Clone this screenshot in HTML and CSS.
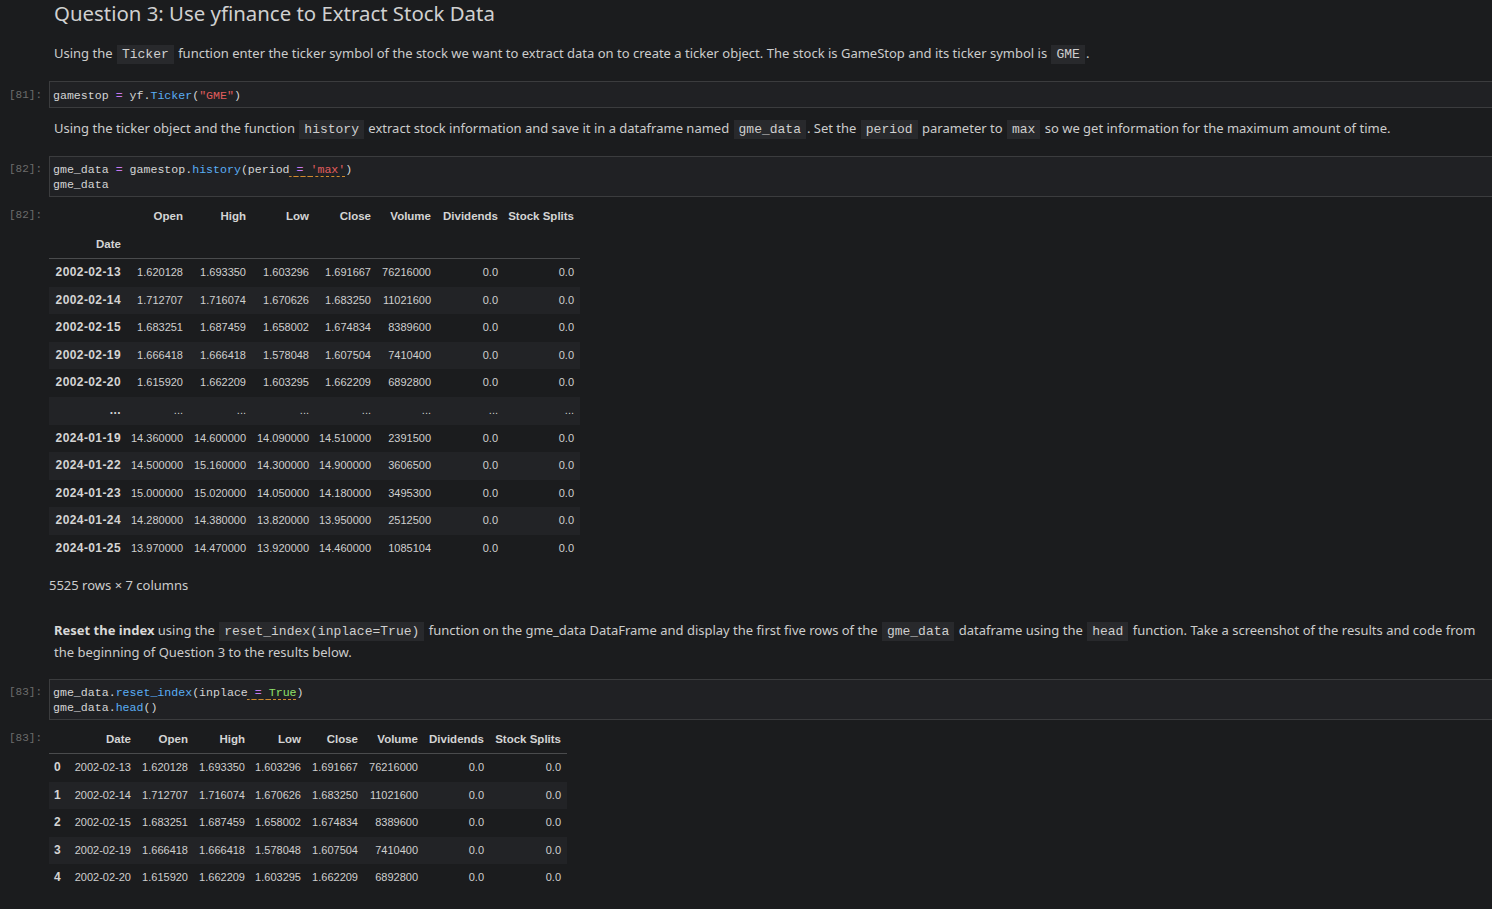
FILE: index.html
```html
<!DOCTYPE html>
<html lang="en">
<head>
<meta charset="utf-8">
<title>Question 3: Use yfinance to Extract Stock Data</title>
<link rel="stylesheet" href="styles.css">
</head>
<body>
<main class="notebook">

  <section class="cell md cell-title">
    <div class="prompt"></div>
    <div class="cell-body">
      <h2 class="title">Question 3: Use yfinance to Extract Stock Data</h2>
    </div>
  </section>

  <section class="cell md cell-p1">
    <div class="prompt"></div>
    <div class="cell-body">
      <p>Using the <code class="inline">Ticker</code> function enter the ticker symbol of the stock we want to extract data on to create a ticker object. The stock is GameStop and its ticker symbol is <code class="inline">GME</code>.</p>
    </div>
  </section>

  <section class="cell code cell-c81">
    <div class="prompt">[81]:</div>
    <div class="cell-body">
      <div class="input">gamestop <span class="op">=</span> yf.<span class="fn">Ticker</span>(<span class="str">"GME"</span>)</div>
    </div>
  </section>

  <section class="cell md cell-p2">
    <div class="prompt"></div>
    <div class="cell-body">
      <p>Using the ticker object and the function <code class="inline">history</code> extract stock information and save it in a dataframe named <code class="inline">gme_data</code>. Set the <code class="inline">period</code> parameter to <code class="inline">max</code> so we get information for the maximum amount of time.</p>
    </div>
  </section>

  <section class="cell code cell-c82">
    <div class="prompt">[82]:</div>
    <div class="cell-body">
      <div class="input">gme_data <span class="op">=</span> gamestop.<span class="fn">history</span>(period<span class="lint"> <span class="op">=</span> <span class="str">'max'</span></span>)
gme_data</div>
    </div>
  </section>

  <section class="cell output out-82">
    <div class="prompt">[82]:</div>
    <div class="cell-body">
      <table class="df df-hist">
        <colgroup><col><col><col><col><col><col><col><col></colgroup>
        <thead>
          <tr><th></th><th>Open</th><th>High</th><th>Low</th><th>Close</th><th>Volume</th><th>Dividends</th><th>Stock Splits</th></tr>
          <tr class="index-name"><th>Date</th><th></th><th></th><th></th><th></th><th></th><th></th><th></th></tr>
        </thead>
        <tbody>
          <tr><th>2002-02-13</th><td>1.620128</td><td>1.693350</td><td>1.603296</td><td>1.691667</td><td>76216000</td><td>0.0</td><td>0.0</td></tr>
          <tr><th>2002-02-14</th><td>1.712707</td><td>1.716074</td><td>1.670626</td><td>1.683250</td><td>11021600</td><td>0.0</td><td>0.0</td></tr>
          <tr><th>2002-02-15</th><td>1.683251</td><td>1.687459</td><td>1.658002</td><td>1.674834</td><td>8389600</td><td>0.0</td><td>0.0</td></tr>
          <tr><th>2002-02-19</th><td>1.666418</td><td>1.666418</td><td>1.578048</td><td>1.607504</td><td>7410400</td><td>0.0</td><td>0.0</td></tr>
          <tr><th>2002-02-20</th><td>1.615920</td><td>1.662209</td><td>1.603295</td><td>1.662209</td><td>6892800</td><td>0.0</td><td>0.0</td></tr>
          <tr><th>...</th><td>...</td><td>...</td><td>...</td><td>...</td><td>...</td><td>...</td><td>...</td></tr>
          <tr><th>2024-01-19</th><td>14.360000</td><td>14.600000</td><td>14.090000</td><td>14.510000</td><td>2391500</td><td>0.0</td><td>0.0</td></tr>
          <tr><th>2024-01-22</th><td>14.500000</td><td>15.160000</td><td>14.300000</td><td>14.900000</td><td>3606500</td><td>0.0</td><td>0.0</td></tr>
          <tr><th>2024-01-23</th><td>15.000000</td><td>15.020000</td><td>14.050000</td><td>14.180000</td><td>3495300</td><td>0.0</td><td>0.0</td></tr>
          <tr><th>2024-01-24</th><td>14.280000</td><td>14.380000</td><td>13.820000</td><td>13.950000</td><td>2512500</td><td>0.0</td><td>0.0</td></tr>
          <tr><th>2024-01-25</th><td>13.970000</td><td>14.470000</td><td>13.920000</td><td>14.460000</td><td>1085104</td><td>0.0</td><td>0.0</td></tr>
        </tbody>
      </table>
      <p class="df-shape">5525 rows × 7 columns</p>
    </div>
  </section>

  <section class="cell md cell-p3">
    <div class="prompt"></div>
    <div class="cell-body">
      <p><strong>Reset the index</strong> using the <code class="inline">reset_index(inplace=True)</code> function on the gme_data DataFrame and display the first five rows of the <code class="inline">gme_data</code> dataframe using the <code class="inline">head</code> function. Take a screenshot of the results and code from the beginning of Question 3 to the results below.</p>
    </div>
  </section>

  <section class="cell code cell-c83">
    <div class="prompt">[83]:</div>
    <div class="cell-body">
      <div class="input">gme_data.<span class="fn">reset_index</span>(inplace<span class="lint"> <span class="op">=</span> <span class="kw">True</span></span>)
gme_data.<span class="fn">head</span>()</div>
    </div>
  </section>

  <section class="cell output out-83">
    <div class="prompt">[83]:</div>
    <div class="cell-body">
      <table class="df df-head">
        <colgroup><col><col><col><col><col><col><col><col><col></colgroup>
        <thead>
          <tr><th></th><th>Date</th><th>Open</th><th>High</th><th>Low</th><th>Close</th><th>Volume</th><th>Dividends</th><th>Stock Splits</th></tr>
        </thead>
        <tbody>
          <tr><th>0</th><td>2002-02-13</td><td>1.620128</td><td>1.693350</td><td>1.603296</td><td>1.691667</td><td>76216000</td><td>0.0</td><td>0.0</td></tr>
          <tr><th>1</th><td>2002-02-14</td><td>1.712707</td><td>1.716074</td><td>1.670626</td><td>1.683250</td><td>11021600</td><td>0.0</td><td>0.0</td></tr>
          <tr><th>2</th><td>2002-02-15</td><td>1.683251</td><td>1.687459</td><td>1.658002</td><td>1.674834</td><td>8389600</td><td>0.0</td><td>0.0</td></tr>
          <tr><th>3</th><td>2002-02-19</td><td>1.666418</td><td>1.666418</td><td>1.578048</td><td>1.607504</td><td>7410400</td><td>0.0</td><td>0.0</td></tr>
          <tr><th>4</th><td>2002-02-20</td><td>1.615920</td><td>1.662209</td><td>1.603295</td><td>1.662209</td><td>6892800</td><td>0.0</td><td>0.0</td></tr>
        </tbody>
      </table>
    </div>
  </section>

</main>
</body>
</html>
```

FILE: styles.css
```css
html, body {
  margin: 0;
  padding: 0;
  background: #1b1c1e;
  overflow: hidden;
}

body {
  font-family: "Noto Sans", "Segoe UI", sans-serif;
  font-size: 13px;
  color: #cccccc;
}

.notebook {
  margin-right: -1px;
}

.cell {
  display: flex;
  align-items: flex-start;
}

.prompt {
  flex: 0 0 49px;
  box-sizing: border-box;
  padding-right: 7px;
  text-align: right;
  font: 11px/15px "Liberation Mono", monospace;
  color: #6c6c6c;
}

.cell-body {
  flex: 1 1 auto;
  min-width: 0;
}

.md .cell-body {
  padding-left: 5px;
  padding-right: 4px;
}

/* ---------- markdown ---------- */
.title {
  margin: 0;
  font-size: 20.4px;
  line-height: 26px;
  font-weight: 400;
  color: #d0d0d0;
}

.md p {
  margin: 0;
  line-height: 21px;
}

.md strong {
  font-weight: 700;
  color: #d8d8d8;
}

.inline {
  font-family: "Liberation Mono", monospace;
  font-size: 13px;
  background: #28292c;
  color: #cfcfcf;
  padding: 2px 5px;
  margin: 0 1px;
}

/* ---------- code input ---------- */
.input {
  background: #202124;
  border: 1px solid #3b3c3e;
  border-right-width: 0;
  padding: 5.5px 3px 4px;
  font: 11.6px/15px "Liberation Mono", monospace;
  color: #d4d4d4;
  white-space: pre;
}

.op  { color: #c678f0; }
.fn  { color: #5aaef5; }
.str { color: #e05d5d; }
.kw  { color: #8fe06a; }

.lint {
  text-decoration: underline dashed #d08a2e;
  text-decoration-thickness: 1px;
  text-underline-offset: 3px;
}

/* ---------- vertical rhythm ---------- */
.cell-p1  { margin-top: 17px; }
.cell-c81 { margin-top: 16px; }
.code .prompt { padding-top: 6.5px; }
.cell-p2  { margin-top: 10px; }
.cell-c82 { margin-top: 16px; }
.output   { margin-top: 5px; }
.output .prompt { padding-top: 6px; }
.cell-p3  { margin-top: 26px; }
.cell-c83 { margin-top: 16px; }

/* ---------- dataframe ---------- */
.df {
  border-collapse: collapse;
  table-layout: fixed;
  font-family: "Liberation Sans", Arial, sans-serif;
  font-size: 11px;
  color: #cfcfcf;
}

.df th, .df td {
  padding: 6px 6px 6px 0;
  text-align: right;
  white-space: nowrap;
  line-height: 15.6px;
}

.df thead th {
  font-weight: 700;
  font-size: 11.5px;
  line-height: 16px;
  color: #d4d4d4;
}

.df tbody th {
  font-weight: 700;
  font-size: 12px;
  letter-spacing: 0.4px;
  color: #d4d4d4;
}

.df thead tr:last-child th {
  border-bottom: 1px solid #4a4b4d;
}

.df tbody tr:nth-child(even) {
  background: #222326;
}

.df-hist { width: 531px; }
.df-hist col:nth-child(1) { width: 78px; }
.df-hist col:nth-child(2) { width: 62px; }
.df-hist col:nth-child(3) { width: 63px; }
.df-hist col:nth-child(4) { width: 63px; }
.df-hist col:nth-child(5) { width: 62px; }
.df-hist col:nth-child(6) { width: 60px; }
.df-hist col:nth-child(7) { width: 67px; }
.df-hist col:nth-child(8) { width: 76px; }

.df-head { width: 518px; }
.df-head col:nth-child(1) { width: 18px; }
.df-head col:nth-child(2) { width: 70px; }
.df-head col:nth-child(3) { width: 57px; }
.df-head col:nth-child(4) { width: 57px; }
.df-head col:nth-child(5) { width: 56px; }
.df-head col:nth-child(6) { width: 57px; }
.df-head col:nth-child(7) { width: 60px; }
.df-head col:nth-child(8) { width: 66px; }
.df-head col:nth-child(9) { width: 77px; }

.df-shape {
  margin: 13px 0 0;
  line-height: 18px;
  font-size: 13px;
}
```
